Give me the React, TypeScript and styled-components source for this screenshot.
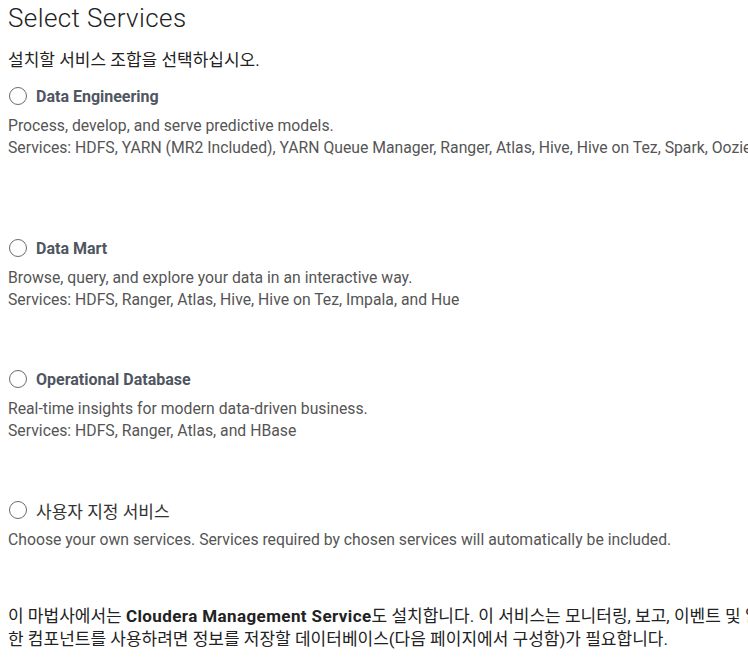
import styled, { createGlobalStyle } from "styled-components";

const GlobalStyle = createGlobalStyle`
  html, body {
    margin: 0;
    padding: 0;
    background: #ffffff;
    overflow: hidden;
  }
  body {
    font-family: Roboto, "Noto Sans CJK KR", "Liberation Sans", sans-serif;
  }
`;

const Page = styled.div`
  display: flex;
  flex-direction: column;
  width: 1300px;
  padding: 0 8px;
  white-space: nowrap;
`;

const Title = styled.h1`
  margin: 0;
  font-size: 26px;
  font-weight: 300;
  letter-spacing: 0.4px;
  line-height: 36px;
  color: #222;
`;

const Intro = styled.p`
  margin: 13px 0 14px;
  font-size: 17px;
  line-height: 22px;
  color: #222;
`;

const Option = styled.div<{ $extra?: number }>`
  display: flex;
  flex-direction: column;
  margin-bottom: ${(p) => 57 + (p.$extra ?? 0)}px;
`;

const RadioRow = styled.label`
  display: flex;
  align-items: center;
  gap: 9px;
  height: 22px;
  margin-bottom: 8px;
  cursor: pointer;
`;

const Circle = styled.span`
  width: 18px;
  height: 18px;
  box-sizing: border-box;
  border: 1.5px solid #6b6b6b;
  border-radius: 50%;
  margin-left: 1px;
  background: #fff;
`;

const Label = styled.span<{ $plain?: boolean }>`
  font-size: ${(p) => (p.$plain ? "17px" : "16px")};
  font-weight: ${(p) => (p.$plain ? 400 : 700)};
  color: ${(p) => (p.$plain ? "#333" : "#4f5661")};
`;

const Line = styled.div`
  font-size: 15.75px;
  line-height: 22px;
  color: #555;
`;

const Note = styled.p`
  margin: -3px 0 0;
  font-size: 17px;
  line-height: 23px;
  color: #222;

  b {
    font-weight: 700;
    letter-spacing: 0.4px;
  }
`;

const options = [
  {
    name: "Data Engineering",
    desc: "Process, develop, and serve predictive models.",
    services:
      "Services: HDFS, YARN (MR2 Included), YARN Queue Manager, Ranger, Atlas, Hive, Hive on Tez, Spark, Oozie, HBase, Livy, Zeppelin, and Hue",
    extra: 21,
  },
  {
    name: "Data Mart",
    desc: "Browse, query, and explore your data in an interactive way.",
    services: "Services: HDFS, Ranger, Atlas, Hive, Hive on Tez, Impala, and Hue",
  },
  {
    name: "Operational Database",
    desc: "Real-time insights for modern data-driven business.",
    services: "Services: HDFS, Ranger, Atlas, and HBase",
  },
];

export default function App() {
  return (
    <>
      <GlobalStyle />
      <Page>
        <Title>Select Services</Title>
        <Intro>설치할 서비스 조합을 선택하십시오.</Intro>

        {options.map((o) => (
          <Option key={o.name} $extra={o.extra}>
            <RadioRow>
              <Circle />
              <Label>{o.name}</Label>
            </RadioRow>
            <Line>{o.desc}</Line>
            <Line>{o.services}</Line>
          </Option>
        ))}

        <Option>
          <RadioRow>
            <Circle />
            <Label $plain>사용자 지정 서비스</Label>
          </RadioRow>
          <Line>
            Choose your own services. Services required by chosen services will
            automatically be included.
          </Line>
        </Option>

        <Note>
          이 마법사에서는 <b>Cloudera Management Service</b>도 설치합니다. 이
          서비스는 모니터링, 보고, 이벤트 및 알림 기능을 지원합니다. 이러
          <br />
          한 컴포넌트를 사용하려면 정보를 저장할 데이터베이스(다음 페이지에서
          구성함)가 필요합니다.
        </Note>
      </Page>
    </>
  );
}
